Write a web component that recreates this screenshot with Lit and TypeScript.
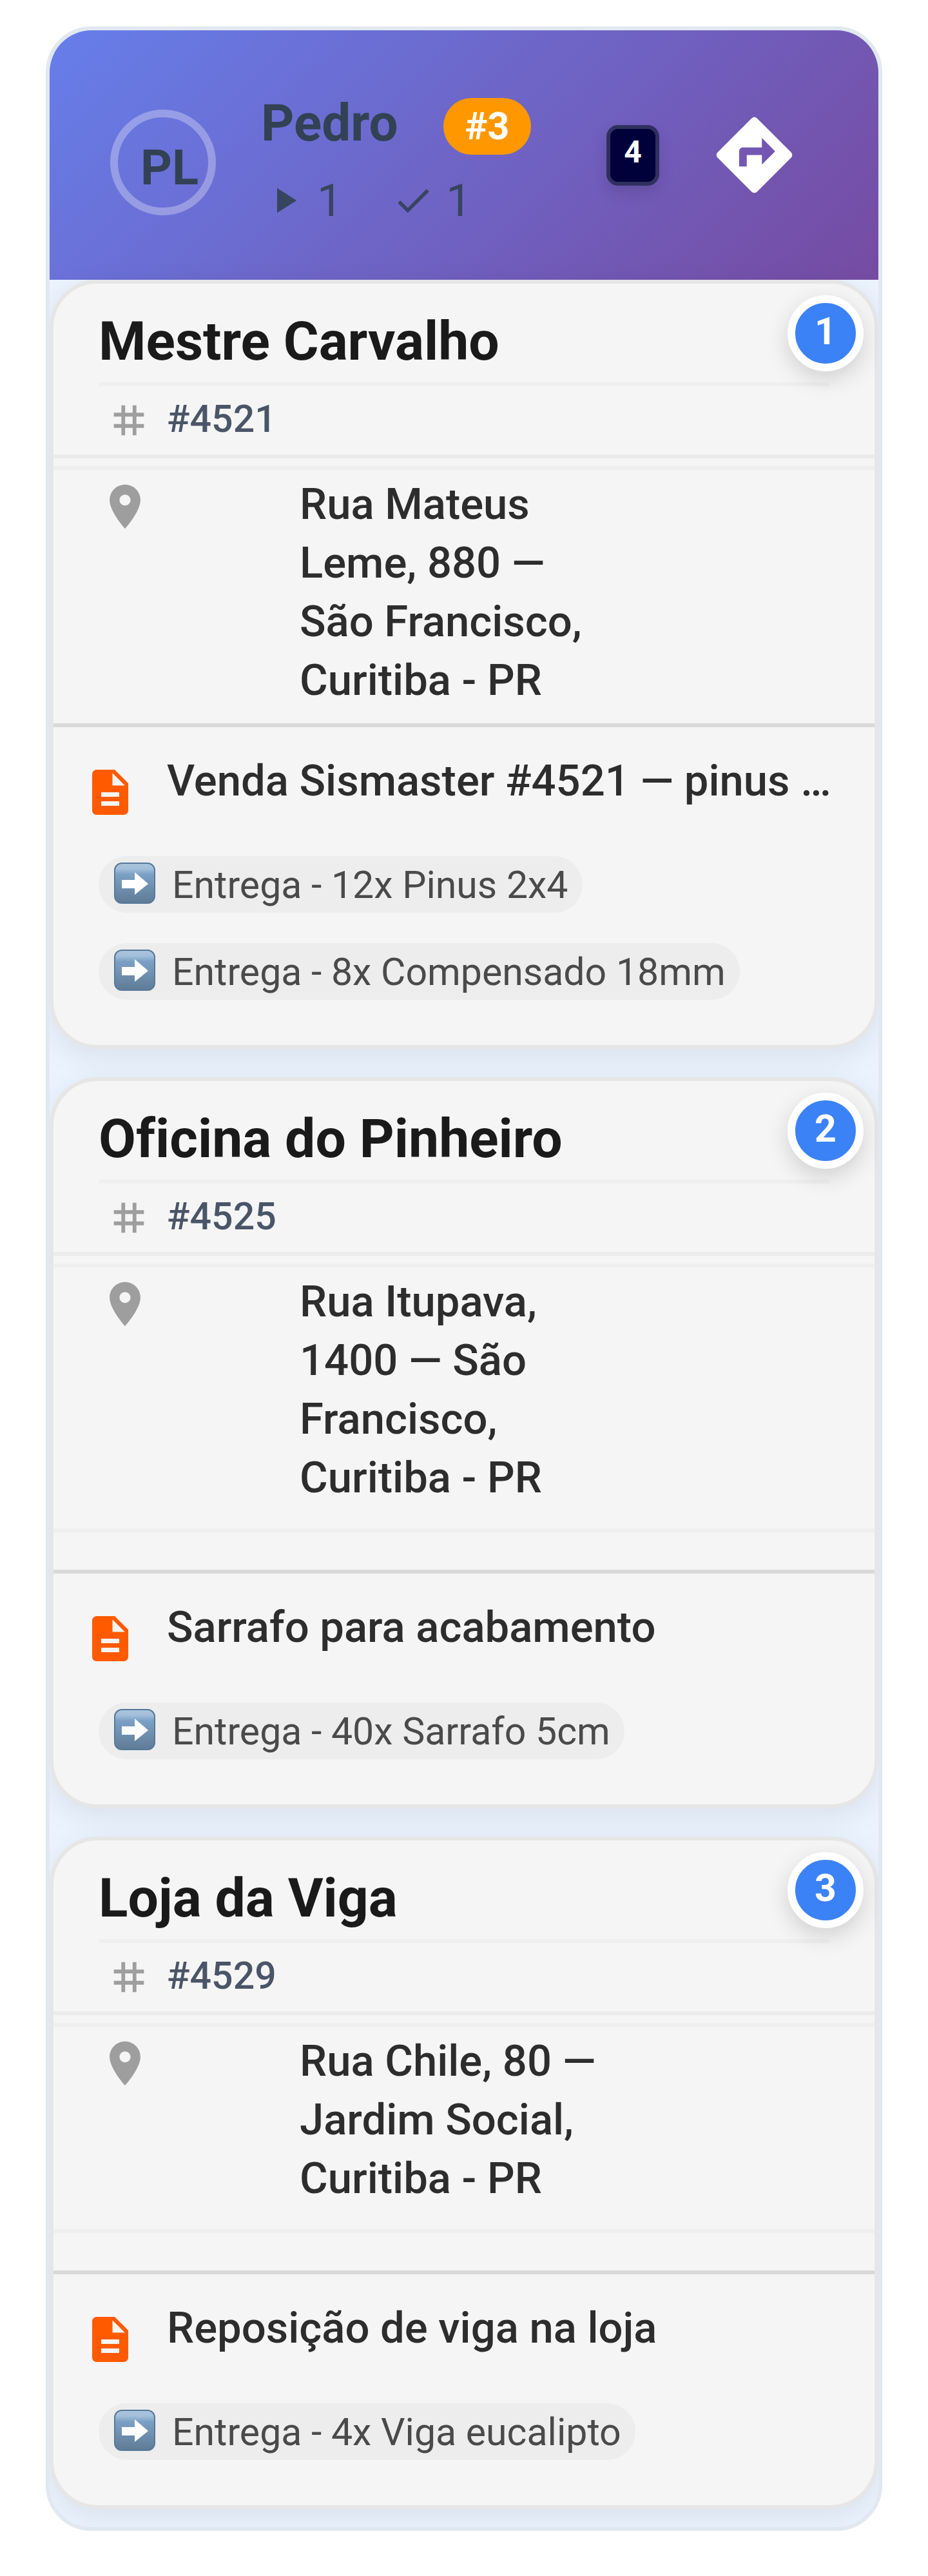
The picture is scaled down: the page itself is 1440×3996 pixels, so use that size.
import { LitElement, html, css, svg } from "lit";
import { customElement, property } from "lit/decorators.js";

interface Stop {
  order: number;
  client: string;
  code: string;
  address: string[];
  note: string;
  items: string[];
  compact?: boolean;
}

const STOPS: Stop[] = [
  {
    order: 1,
    client: "Mestre Carvalho",
    code: "#4521",
    address: ["Rua Mateus", "Leme, 880 —", "São Francisco,", "Curitiba - PR"],
    note: "Venda Sismaster #4521 — pinus …",
    items: ["Entrega - 12x Pinus 2x4", "Entrega - 8x Compensado 18mm"],
    compact: true,
  },
  {
    order: 2,
    client: "Oficina do Pinheiro",
    code: "#4525",
    address: ["Rua Itupava,", "1400 — São", "Francisco,", "Curitiba - PR"],
    note: "Sarrafo para acabamento",
    items: ["Entrega - 40x Sarrafo 5cm"],
  },
  {
    order: 3,
    client: "Loja da Viga",
    code: "#4529",
    address: ["Rua Chile, 80 —", "Jardim Social,", "Curitiba - PR"],
    note: "Reposição de viga na loja",
    items: ["Entrega - 4x Viga eucalipto"],
  },
];

const icon = (name: string, d: string) => html`
  <svg class="icon ${name}" viewBox="0 0 24 24" aria-hidden="true">${svg`<path d=${d} />`}</svg>
`;

const TAG =
  "M20 10V8h-4V4h-2v4h-4V4H8v4H4v2h4v4H4v2h4v4h2v-4h4v4h2v-4h4v-2h-4v-4h4zm-6 4h-4v-4h4v4z";
const PIN =
  "M12 2C8.13 2 5 5.13 5 9c0 5.25 7 13 7 13s7-7.75 7-13c0-3.87-3.13-7-7-7zm0 9.5c-1.38 0-2.5-1.12-2.5-2.5s1.12-2.5 2.5-2.5 2.5 1.12 2.5 2.5-1.12 2.5-2.5 2.5z";
const DOCUMENT =
  "M14 2H6c-1.1 0-1.99.9-1.99 2L4 20c0 1.1.89 2 1.99 2H18c1.1 0 2-.9 2-2V8l-6-6zm2 16H8v-2h8v2zm0-4H8v-2h8v2zm-3-5V3.5L18.5 9H13z";
const DIRECTIONS =
  "M21.71 11.29l-9-9c-.39-.39-1.02-.39-1.41 0l-9 9c-.39.39-.39 1.02 0 1.41l9 9c.39.39 1.02.39 1.41 0l9-9c.39-.38.39-1.01 0-1.41zM14 14.5V12h-4v3H8v-4c0-.55.45-1 1-1h5V7.5l3.5 3.5-3.5 3.5z";
const PLAY = "M8 5v14l11-7z";
const CHECK = "M9 16.17L4.83 12l-1.42 1.41L9 19 21 7l-1.41-1.41z";

const arrowTile = html`
  <svg class="arrow" viewBox="0 0 64 64" aria-hidden="true">
    <defs>
      <linearGradient id="tile" x1="0" y1="0" x2="0" y2="1">
        <stop offset="0" stop-color="#a9c4dd" />
        <stop offset="0.14" stop-color="#a3bfda" />
        <stop offset="0.28" stop-color="#7ba0c5" />
        <stop offset="1" stop-color="#5f7b95" />
      </linearGradient>
    </defs>
    <rect x="1" y="1" width="62" height="62" rx="11" fill="url(#tile)" stroke="#56799b" stroke-width="2" />
    <path d="M12 27h20V15l21 18-21 17V40H12z" fill="#fff" />
  </svg>
`;

@customElement("stop-card")
export class StopCard extends LitElement {
  @property({ attribute: false }) stop!: Stop;

  static styles = css`
    :host {
      display: block;
    }
    .card {
      position: relative;
      border: 6px solid #e6e6e6;
      border-radius: 74px;
      background: #f5f5f5;
      box-shadow: 0 12px 47px rgba(0, 0, 0, 0.08);
    }
    .badge {
      position: absolute;
      top: 18px;
      right: 17px;
      box-sizing: border-box;
      width: 118px;
      height: 118px;
      border: 12px solid #fff;
      border-radius: 50%;
      background: #3b82f6;
      box-shadow: 0 12px 35px rgba(0, 0, 0, 0.15);
      color: #fff;
      font-size: 59px;
      font-weight: 700;
      line-height: 88px;
      text-align: center;
    }
    .heading {
      padding: 34px 70px 0;
      border-bottom: 6px solid #ebebeb;
    }
    h2 {
      margin: 0;
      padding-bottom: 7px;
      border-bottom: 6px solid #efefef;
      color: #1a1a1a;
      font-size: 84px;
      font-weight: 700;
      line-height: 112px;
    }
    .code {
      display: flex;
      align-items: center;
      gap: 24px;
      height: 88px;
      padding: 9px 12px;
      color: #4a5568;
      font-size: 59px;
      font-weight: 500;
    }
    .code-text {
      padding-bottom: 6px;
    }
    .icon {
      flex: none;
      display: block;
      fill: #9e9e9e;
    }
    .tag {
      width: 70px;
      height: 70px;
    }
    .pin {
      width: 82px;
      height: 82px;
      margin-top: 8px;
    }
    .document {
      width: 84px;
      height: 84px;
      margin-top: 15px;
      fill: #ff5a00;
    }
    .place {
      display: flex;
      gap: 230px;
      margin-top: 12px;
      padding: 8px 70px 21px;
      border-top: 6px solid #efefef;
    }
    .place.ruled {
      padding-bottom: 33px;
      margin-bottom: 58px;
      border-bottom: 6px solid #efefef;
    }
    address {
      color: #2d2d2d;
      font-size: 67px;
      font-style: normal;
      font-weight: 500;
      line-height: 91px;
    }
    .line {
      display: block;
      white-space: nowrap;
    }
    .order {
      padding: 44px 46px 70px;
      border-top: 6px solid #d9d9d9;
    }
    .note {
      display: flex;
      gap: 46px;
      margin-bottom: 57px;
    }
    .note-text {
      overflow: hidden;
      margin: 0;
      color: #2d2d2d;
      font-size: 67px;
      font-weight: 500;
      line-height: 78px;
      text-overflow: ellipsis;
      white-space: nowrap;
    }
    .items {
      display: flex;
      flex-direction: column;
      align-items: flex-start;
      gap: 47px;
      margin: 0;
      padding: 0 24px;
      list-style: none;
    }
    .chip {
      display: flex;
      align-items: center;
      gap: 26px;
      height: 88px;
      padding: 0 22px 0 24px;
      border-radius: 47px;
      background: #ededed;
      color: #4a4a4a;
      font-size: 59px;
      white-space: nowrap;
    }
    .arrow {
      flex: none;
      width: 64px;
      height: 64px;
      margin-bottom: 4px;
    }
  `;

  render() {
    const { order, client, code, address, note, items, compact } = this.stop;
    return html`
      <article class="card">
        <div class="heading">
          <h2>${client}</h2>
          <div class="code">${icon("tag", TAG)}<span class="code-text">${code}</span></div>
        </div>
        <div class=${compact ? "place" : "place ruled"}>
          ${icon("pin", PIN)}
          <address>${address.map((line) => html`<span class="line">${line}</span>`)}</address>
        </div>
        <div class="order">
          <div class="note">
            ${icon("document", DOCUMENT)}
            <p class="note-text">${note}</p>
          </div>
          <ul class="items">
            ${items.map((item) => html`<li class="chip">${arrowTile}<span>${item}</span></li>`)}
          </ul>
        </div>
        <span class="badge">${order}</span>
      </article>
    `;
  }
}

@customElement("app-root")
export class AppRoot extends LitElement {
  static styles = css`
    :host {
      display: block;
      padding: 41px 71px 71px;
      background: #fff;
      font-family: Roboto, "Liberation Sans", sans-serif;
      font-variant-ligatures: none;
    }
    .route {
      overflow: hidden;
      border: 6px solid #e2e8f0;
      border-radius: 71px;
      background: #ebf3ff;
    }
    .header {
      display: flex;
      align-items: flex-start;
      box-sizing: border-box;
      height: 387px;
      padding: 94px 122px 0 94px;
      background: linear-gradient(135deg, #667eea 0%, #764ba2 100%);
      color: #334155;
    }
    .avatar {
      box-sizing: border-box;
      width: 164px;
      height: 164px;
      margin-top: 29px;
      padding-left: 20px;
      border: 12px solid rgba(255, 255, 255, 0.3);
      border-radius: 50%;
      font-size: 76px;
      font-weight: 700;
      line-height: 156px;
      text-align: center;
    }
    .driver {
      flex: 1;
      padding: 11px 0 0 70px;
    }
    .name {
      display: flex;
      align-items: flex-start;
      gap: 70px;
    }
    h1 {
      margin: 0;
      font-size: 80px;
      font-weight: 700;
      line-height: 78px;
    }
    .rank {
      padding: 0 34px;
      border-radius: 47px;
      background: #ff9800;
      color: #fff;
      font-size: 59px;
      font-weight: 700;
      line-height: 88px;
    }
    .stats {
      display: flex;
      gap: 77px;
      padding: 30px 0 0 3px;
      opacity: 0.9;
      font-size: 70px;
      line-height: 82px;
    }
    .stat {
      display: flex;
      align-items: center;
      gap: 18px;
    }
    .icon {
      flex: none;
      display: block;
      fill: currentColor;
    }
    .play,
    .check {
      width: 66px;
      height: 66px;
    }
    .actions {
      display: flex;
      align-items: center;
      gap: 77px;
      padding-top: 29px;
    }
    .count {
      box-sizing: border-box;
      width: 82px;
      height: 94px;
      border: 6px solid #303060;
      border-radius: 18px;
      background: #00003a;
      box-shadow: 0 12px 24px rgba(0, 0, 0, 0.12);
      color: #fff;
      font-size: 48px;
      font-weight: 700;
      line-height: 72px;
      text-align: center;
    }
    .navigate {
      display: block;
      padding: 0;
      border: 0;
      background: none;
      color: #fff;
    }
    .directions {
      width: 141px;
      height: 141px;
    }
    .stops {
      display: flex;
      flex-direction: column;
      gap: 44px;
      padding-bottom: 28px;
    }
  `;

  render() {
    return html`
      <section class="route">
        <header class="header">
          <div class="avatar">PL</div>
          <div class="driver">
            <div class="name">
              <h1>Pedro</h1>
              <span class="rank">#3</span>
            </div>
            <div class="stats">
              <span class="stat">${icon("play", PLAY)}1</span>
              <span class="stat">${icon("check", CHECK)}1</span>
            </div>
          </div>
          <div class="actions">
            <span class="count">4</span>
            <button class="navigate" type="button" aria-label="Rota">${icon("directions", DIRECTIONS)}</button>
          </div>
        </header>
        <div class="stops">
          ${STOPS.map((stop) => html`<stop-card .stop=${stop}></stop-card>`)}
        </div>
      </section>
    `;
  }
}
